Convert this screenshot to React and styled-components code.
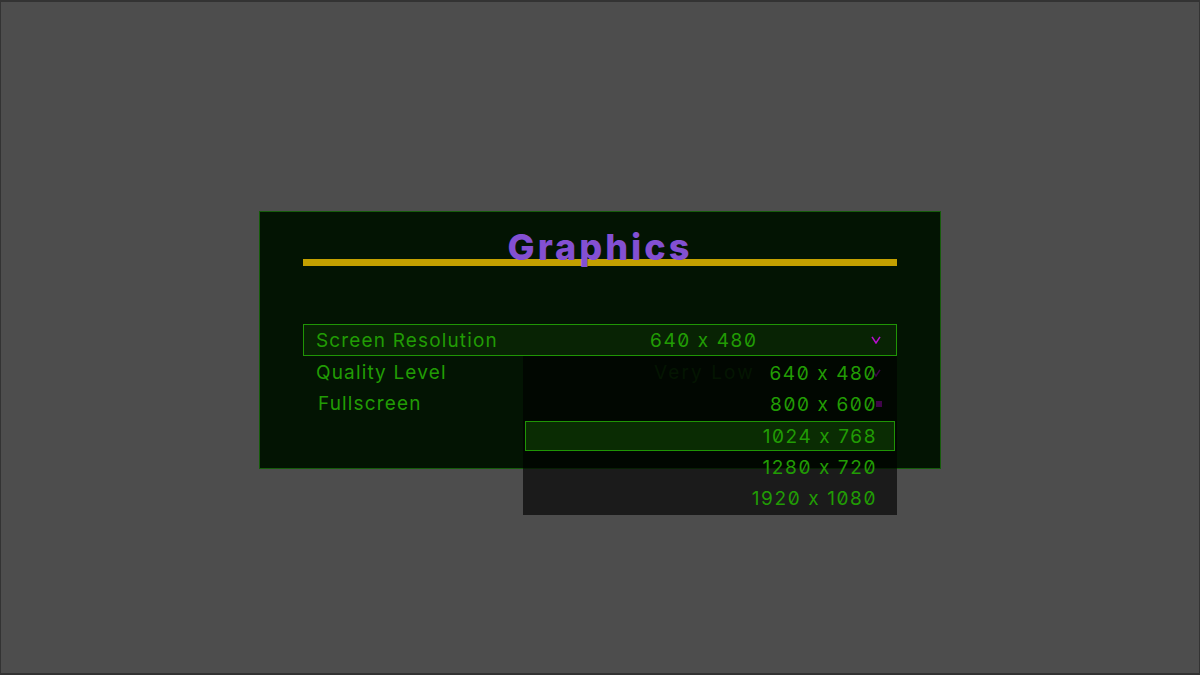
import styled, { createGlobalStyle } from 'styled-components';

const Global = createGlobalStyle`
  html, body {
    margin: 0;
    height: 100%;
    background: #4d4d4d;
  }
  #root {
    height: 100%;
  }
`;

const Screen = styled.div`
  box-sizing: border-box;
  width: 1200px;
  height: 675px;
  display: flex;
  align-items: flex-start;
  justify-content: center;
  padding-top: 209px;
  background: #4d4d4d;
  border: solid #333333;
  border-width: 2px 1px;
  overflow: hidden;
  font-family: Inter, 'Liberation Sans', sans-serif;
  font-variant-numeric: slashed-zero;
  color: #219c04;
`;

const Panel = styled.section`
  box-sizing: border-box;
  width: 682px;
  height: 258px;
  padding: 19px 43px 0;
  background: #031403;
  border: 1px solid #155c0b;
  display: flex;
  flex-direction: column;
`;

const Title = styled.h1`
  position: relative;
  z-index: 1;
  margin: 0;
  height: 33px;
  line-height: 33px;
  text-align: center;
  font-size: 36px;
  font-weight: 800;
  letter-spacing: 3px;
  color: #8350d2;
`;

const Rule = styled.div`
  height: 7px;
  margin-top: -5px;
  background: #c3a000;
`;

const Rows = styled.div`
  position: relative;
  margin-top: 58px;
  display: flex;
  flex-direction: column;
`;

const Row = styled.div`
  box-sizing: border-box;
  height: ${({ $active }) => ($active ? '32px' : '31px')};
  display: grid;
  grid-template-columns: 1fr 1fr 40px;
  align-items: center;
  padding-left: ${({ $indent }) => $indent}px;
  padding-top: ${({ $active }) => ($active ? '0' : '2px')};
  background: ${({ $active }) => ($active ? '#082304' : 'transparent')};
  border: 1px solid ${({ $active }) => ($active ? '#1f9505' : 'transparent')};
  font-size: 19px;
  letter-spacing: 1.15px;
`;

const Label = styled.span`
  white-space: nowrap;
`;

const Value = styled.span`
  justify-self: start;
  margin-left: ${({ $offset }) => $offset}px;
  white-space: nowrap;
  letter-spacing: ${({ $dim }) => ($dim ? '2.1px' : '1.6px')};
  opacity: ${({ $dim }) => ($dim ? 0.3 : 1)};
`;

const Mark = styled.span`
  justify-self: center;
  display: flex;
  color: #b80ed0;
`;

const Box = styled.span`
  display: block;
  width: 6px;
  height: 6px;
  margin-left: 5px;
  background: #b80ed0;
`;

const Dropdown = styled.ul`
  position: absolute;
  top: 32px;
  right: 0;
  box-sizing: border-box;
  width: 374px;
  height: 159px;
  margin: 0;
  padding: 2px 2px 0;
  list-style: none;
  background: rgba(0, 0, 0, 0.65);
`;

const Option = styled.li`
  box-sizing: border-box;
  height: ${({ $selected }) => ($selected ? '30px' : '31.3px')};
  margin-bottom: ${({ $selected }) => ($selected ? '1.3px' : '0')};
  padding-top: ${({ $selected }) => ($selected ? '1px' : '0')};
  display: flex;
  align-items: center;
  justify-content: flex-end;
  padding-right: 17px;
  font-size: 19px;
  letter-spacing: 1.6px;
  background: ${({ $selected }) => ($selected ? '#0a2c03' : 'transparent')};
  border: 1px solid ${({ $selected }) => ($selected ? '#1f9505' : 'transparent')};
`;

const resolutions = ['640 x 480', '800 x 600', '1024 x 768', '1280 x 720', '1920 x 1080'];

const Chevron = () => (
  <svg width='10' height='8' viewBox='0 0 10 8' fill='none'>
    <path d='M1 0.8 5 7 9 0.8' stroke='currentColor' strokeWidth='1.5' />
  </svg>
);

const App = () => {
  return (
    <Screen>
      <Global />
      <Panel>
        <Title>Graphics</Title>
        <Rule />
        <Rows>
          <Row $active $indent={12}>
            <Label>Screen Resolution</Label>
            <Value $offset={64}>640 x 480</Value>
            <Mark>
              <Chevron />
            </Mark>
          </Row>
          <Row $indent={12}>
            <Label>Quality Level</Label>
            <Value $offset={68} $dim>Very Low</Value>
            <Mark>
              <Chevron />
            </Mark>
          </Row>
          <Row $indent={14}>
            <Label>Fullscreen</Label>
            <span />
            <Mark>
              <Box />
            </Mark>
          </Row>
          <Dropdown>
            {resolutions.map((res) => (
              <Option key={res} $selected={res === '1024 x 768'}>
                {res}
              </Option>
            ))}
          </Dropdown>
        </Rows>
      </Panel>
    </Screen>
  );
};

export default App;
